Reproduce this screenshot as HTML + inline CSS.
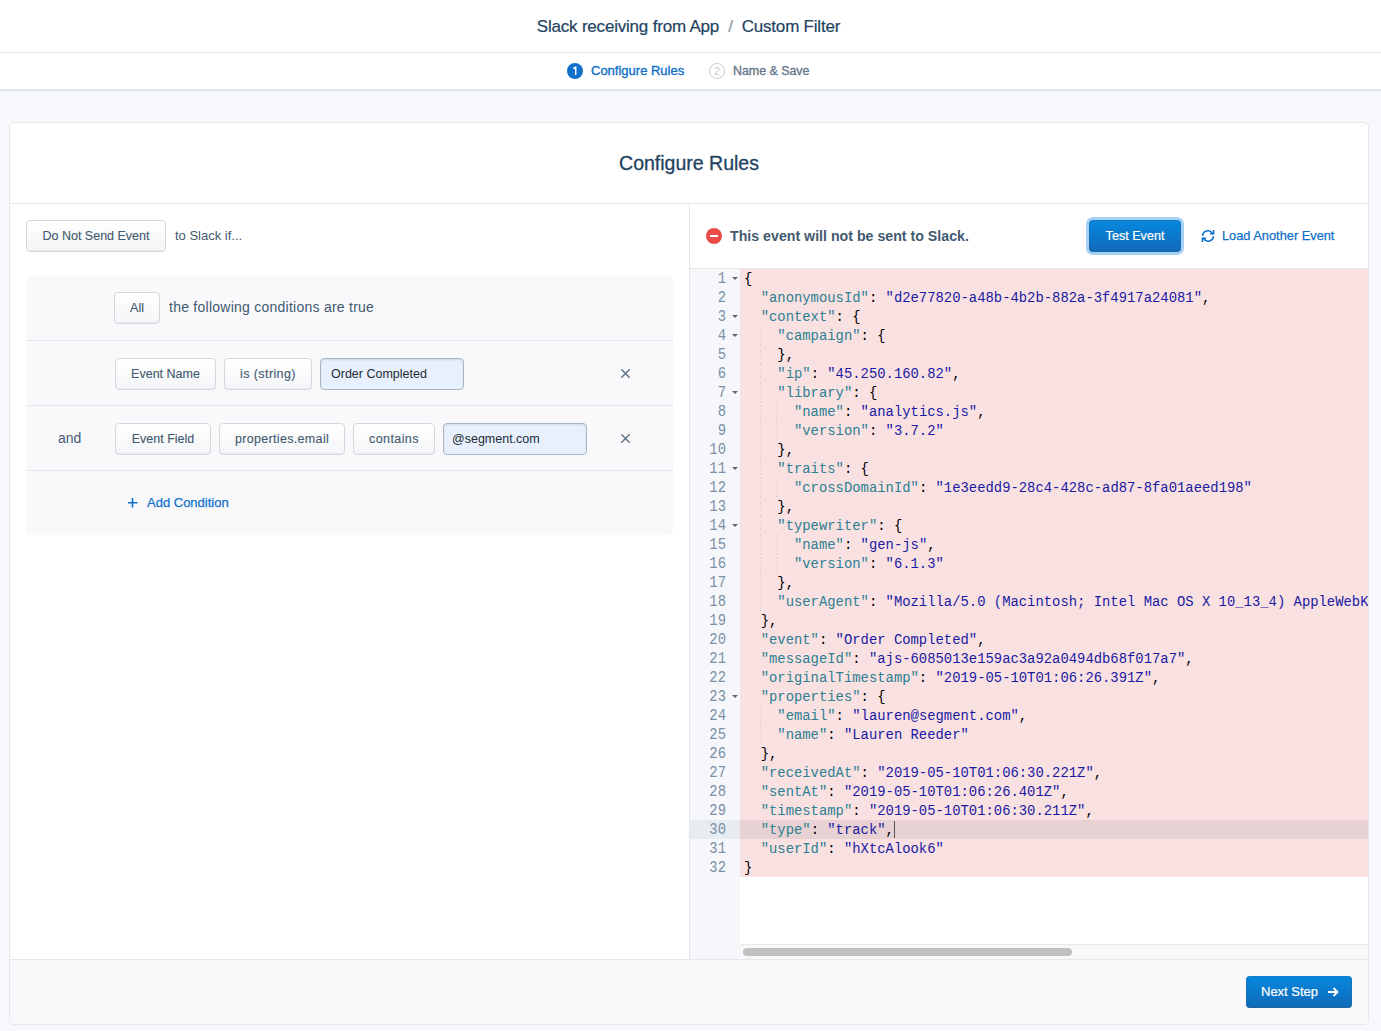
<!DOCTYPE html>
<html><head><meta charset="utf-8">
<style>
*{box-sizing:border-box}
html,body{margin:0;padding:0}
body{width:1381px;height:1031px;overflow:hidden;background:#F6F8FC;font-family:"Liberation Sans",sans-serif;color:#425A70;position:relative}
.a{position:absolute}
#hdr{left:0;top:0;width:1381px;height:53px;background:#fff;border-bottom:1px solid #E4E7EB}
#title{left:-2px;top:1px;width:1381px;height:52px;line-height:52px;text-align:center;font-size:17px;letter-spacing:-0.2px;-webkit-text-stroke:0.2px #234361;color:#234361;white-space:pre}
#title .sep{color:#A6B1BB}
#steps{left:0;top:53px;width:1381px;height:37px;background:#fff;border-bottom:1px solid #E4E7EB;box-shadow:0 1px 0 #D9DDE4}
.circ{width:16px;height:16px;border-radius:50%;font-size:11px;line-height:16px;text-align:center}
#c1{left:567px;top:63px;background:#1070CA;color:#fff;font-size:12px}
#c2{left:709px;top:63px;border:1px solid #C7CED4;color:#C7CED4;line-height:14px}
.steptxt{top:62px;font-size:13px;line-height:18px;white-space:pre;-webkit-text-stroke:0.35px currentColor}
#s1{left:591px;color:#1070CA}
#s2{left:733px;color:#66788A;font-size:12.4px}
#card{left:9px;top:122px;width:1360px;height:903px;background:#fff;border:1px solid #E4E7EB;border-radius:5px;overflow:hidden}
#ctitle{left:10px;top:123px;width:1358px;height:81px;border-bottom:1px solid #E4E7EB;text-align:center;line-height:80px;font-size:19.5px;color:#234361;-webkit-text-stroke:0.3px #234361}
#divider{left:689px;top:204px;width:1px;height:755px;background:#E4E7EB}
#footer{left:10px;top:959px;width:1358px;height:65px;background:#F9F9FB;border-top:1px solid #E4E7EB;border-radius:0 0 4px 4px}
.btn{height:32px;border:1px solid #D4D8DD;border-radius:4px;background:linear-gradient(to bottom,#FFFFFF,#F4F5F7);box-shadow:inset 0 -1px 1px rgba(67,90,111,0.06);font-size:12.5px;line-height:30px;color:#425A70;text-align:center;white-space:pre;-webkit-text-stroke:0.12px #425A70}
.inp{height:32px;border:1px solid #A7B6C2;border-radius:4px;background:#E7F0FC;font-size:12.5px;line-height:30px;color:#1E2A36;white-space:pre;padding-left:10px;box-shadow:inset 0 1px 2px rgba(67,90,111,0.14)}
.lbl{font-size:14px;line-height:18px;white-space:pre;color:#425A70}
#gbox{left:26px;top:276px;width:647px;height:259px;background:#F9F9FB;border-radius:5px}
.rowb{left:26px;width:647px;height:1px;background:#E4E7EB}
.x{width:12px;height:12px}
#nextbtn{left:1246px;top:976px;width:106px;height:32px;border-radius:4px;background:linear-gradient(to bottom,#0788DE,#116AB8);box-shadow:inset 0 0 0 1px rgba(67,90,111,0.2),inset 0 -1px 1px rgba(67,90,111,0.2);color:#fff;font-size:13px;line-height:32px;padding-left:15px;white-space:pre;-webkit-text-stroke:0.2px #fff}
#testbtn{left:1089px;top:220px;width:92px;height:32px;border-radius:4px;background:linear-gradient(to bottom,#0788DE,#116AB8);box-shadow:0 0 0 3px #A6D1F4,inset 0 0 0 1px rgba(67,90,111,0.2);color:#fff;font-size:12.6px;line-height:32px;text-align:center;white-space:pre;-webkit-text-stroke:0.2px #fff}
#status{left:730px;top:227px;font-size:14.2px;line-height:18px;font-weight:bold;color:#425A70;white-space:pre}
#loadtxt{left:1222px;top:227px;font-size:12.8px;line-height:18px;color:#1070CA;white-space:pre;-webkit-text-stroke:0.25px #1070CA}
#addc{left:147px;top:494px;font-size:13px;line-height:18px;color:#1070CA;white-space:pre;-webkit-text-stroke:0.25px #1070CA}
/* editor */
#ed{left:690px;top:268px;width:678px;height:691px;background:#fff;border-top:1px solid #E4E7EB;overflow:hidden}
#gutter{left:690px;top:269px;width:50px;height:690px;background:#F5F7FA}
#codebg{left:740px;top:269px;width:628px;height:608px;background:#F9E1E2}
.mono{font-family:"Liberation Mono",monospace;font-size:13.88px;line-height:19px}
#gl{left:690px;top:269px;width:50px}
.gl{height:19px;line-height:21px;text-align:right;padding-right:14px;color:#7B90A6;position:relative}
.gl.act{background:#E7ECF1}
.gl span{display:inline-block;transform:scaleY(1.2);transform-origin:50% 14.5px}
.fw{position:absolute;left:41.5px;top:8px;width:0;height:0;border-left:3px solid transparent;border-right:3px solid transparent;border-top:3.5px solid #666}
#cl{left:740px;top:269px;width:628px;height:608px;overflow:hidden}
.cl{height:19px;line-height:21px;white-space:pre;padding-left:4px;color:#000}
.cl.act{background:rgba(0,0,0,0.07)}
.k{color:#2D7F91}
.s{color:#1A1AA2}
.ig{display:inline-block;height:19px;vertical-align:top;background:repeating-linear-gradient(to bottom,rgba(0,0,0,0.13) 0 1px,rgba(255,255,255,0.75) 1px 2px) right top/1px 100% no-repeat}
.cur{display:inline-block;width:1px;height:17px;background:#555;vertical-align:top;margin-top:1px}
#hscroll{left:740px;top:944px;width:628px;height:15px;background:#F8F8F8;border-top:1px solid #E8E8E8}
#thumb{left:743px;top:948px;width:329px;height:8px;border-radius:4px;background:#C1C1C1}
</style></head><body>
<div class="a" id="hdr"></div>
<div class="a" id="title">Slack receiving from App  <span class="sep">/</span>  Custom Filter</div>
<div class="a" id="steps"></div>
<svg class="a" style="left:567px;top:63px" width="16" height="16" viewBox="0 0 16 16"><circle cx="8" cy="8" r="8" fill="#1070CA"/><path d="M8.7 12V4.2H8.2C7.8 5 7.2 5.4 6.2 5.6" fill="none" stroke="#fff" stroke-width="1.5"/></svg>
<div class="a steptxt" id="s1">Configure Rules</div>
<div class="a circ" id="c2">2</div>
<div class="a steptxt" id="s2">Name &amp; Save</div>

<div class="a" id="card"></div>
<div class="a" id="ctitle">Configure Rules</div>
<div class="a" id="divider"></div>
<div class="a" id="footer"></div>

<div class="a btn" style="left:26px;top:220px;width:140px">Do Not Send Event</div>
<div class="a lbl" style="left:175px;top:227px;font-size:13px">to Slack if...</div>

<div class="a" id="gbox"></div>
<div class="a rowb" style="top:340px"></div>
<div class="a rowb" style="top:405px"></div>
<div class="a rowb" style="top:470px"></div>

<div class="a btn" style="left:114px;top:292px;width:46px">All</div>
<div class="a lbl" style="left:169px;top:298px;letter-spacing:0.25px">the following conditions are true</div>

<div class="a btn" style="left:115px;top:358px;width:101px">Event Name</div>
<div class="a btn" style="left:224px;top:358px;width:88px;letter-spacing:0.4px">is (string)</div>
<div class="a inp" style="left:320px;top:358px;width:144px">Order Completed</div>
<svg class="a x" style="left:618.5px;top:366.5px;width:13px;height:13px" viewBox="0 0 13 13"><path d="M2.8 2.8L10.2 10.2M10.2 2.8L2.8 10.2" stroke="#66788A" stroke-width="1.6" stroke-linecap="round"/></svg>

<div class="a lbl" style="left:58px;top:429px">and</div>
<div class="a btn" style="left:115px;top:423px;width:96px">Event Field</div>
<div class="a btn" style="left:219px;top:423px;width:126px;letter-spacing:0.33px">properties.email</div>
<div class="a btn" style="left:353px;top:423px;width:82px;letter-spacing:0.4px">contains</div>
<div class="a inp" style="left:443px;top:423px;width:144px;padding-left:8px">@segment.com</div>
<svg class="a x" style="left:618.5px;top:431.5px;width:13px;height:13px" viewBox="0 0 13 13"><path d="M2.8 2.8L10.2 10.2M10.2 2.8L2.8 10.2" stroke="#66788A" stroke-width="1.6" stroke-linecap="round"/></svg>

<svg class="a" style="left:127px;top:497px" width="11" height="11" viewBox="0 0 11 11"><path d="M5.5 1V10.5M1 5.75H10.5" stroke="#1070CA" stroke-width="1.6"/></svg>
<div class="a" id="addc">Add Condition</div>

<svg class="a" style="left:706px;top:228px" width="16" height="16" viewBox="0 0 16 16"><circle cx="8" cy="8" r="8" fill="#EC4C47"/><rect x="4" y="7" width="8" height="2" fill="#fff"/></svg>
<div class="a" id="status">This event will not be sent to Slack.</div>
<div class="a" id="testbtn">Test Event</div>
<svg class="a" style="left:1201px;top:229px" width="14" height="14" viewBox="0 0 14 14"><path d="M1.6 6.9A5.3 5.3 0 0 1 11.3 4.2M12.4 7.1A5.3 5.3 0 0 1 2.7 9.8" fill="none" stroke="#1070CA" stroke-width="1.6"/><path d="M12.6 1.1V4.7H9M1.4 12.9V9.3H5" fill="none" stroke="#1070CA" stroke-width="1.6" stroke-linecap="butt" stroke-linejoin="miter"/></svg>
<div class="a" id="loadtxt">Load Another Event</div>

<div class="a" id="ed"></div>
<div class="a" id="gutter"></div>
<div class="a" id="codebg"></div>
<div class="a mono" id="gl">
<div class="gl"><span>1</span><i class="fw"></i></div>
<div class="gl"><span>2</span></div>
<div class="gl"><span>3</span><i class="fw"></i></div>
<div class="gl"><span>4</span><i class="fw"></i></div>
<div class="gl"><span>5</span></div>
<div class="gl"><span>6</span></div>
<div class="gl"><span>7</span><i class="fw"></i></div>
<div class="gl"><span>8</span></div>
<div class="gl"><span>9</span></div>
<div class="gl"><span>10</span></div>
<div class="gl"><span>11</span><i class="fw"></i></div>
<div class="gl"><span>12</span></div>
<div class="gl"><span>13</span></div>
<div class="gl"><span>14</span><i class="fw"></i></div>
<div class="gl"><span>15</span></div>
<div class="gl"><span>16</span></div>
<div class="gl"><span>17</span></div>
<div class="gl"><span>18</span></div>
<div class="gl"><span>19</span></div>
<div class="gl"><span>20</span></div>
<div class="gl"><span>21</span></div>
<div class="gl"><span>22</span></div>
<div class="gl"><span>23</span><i class="fw"></i></div>
<div class="gl"><span>24</span></div>
<div class="gl"><span>25</span></div>
<div class="gl"><span>26</span></div>
<div class="gl"><span>27</span></div>
<div class="gl"><span>28</span></div>
<div class="gl"><span>29</span></div>
<div class="gl act"><span>30</span></div>
<div class="gl"><span>31</span></div>
<div class="gl"><span>32</span></div></div>
<div class="a mono" id="cl">
<div class="cl">{</div>
<div class="cl">  <span class="k">"anonymousId"</span>: <span class="s">"d2e77820-a48b-4b2b-882a-3f4917a24081"</span>,</div>
<div class="cl">  <span class="k">"context"</span>: {</div>
<div class="cl"><span class="ig">  </span>  <span class="k">"campaign"</span>: {</div>
<div class="cl"><span class="ig">  </span>  },</div>
<div class="cl"><span class="ig">  </span>  <span class="k">"ip"</span>: <span class="s">"45.250.160.82"</span>,</div>
<div class="cl"><span class="ig">  </span>  <span class="k">"library"</span>: {</div>
<div class="cl"><span class="ig">  </span><span class="ig">  </span>  <span class="k">"name"</span>: <span class="s">"analytics.js"</span>,</div>
<div class="cl"><span class="ig">  </span><span class="ig">  </span>  <span class="k">"version"</span>: <span class="s">"3.7.2"</span></div>
<div class="cl"><span class="ig">  </span>  },</div>
<div class="cl"><span class="ig">  </span>  <span class="k">"traits"</span>: {</div>
<div class="cl"><span class="ig">  </span><span class="ig">  </span>  <span class="k">"crossDomainId"</span>: <span class="s">"1e3eedd9-28c4-428c-ad87-8fa01aeed198"</span></div>
<div class="cl"><span class="ig">  </span>  },</div>
<div class="cl"><span class="ig">  </span>  <span class="k">"typewriter"</span>: {</div>
<div class="cl"><span class="ig">  </span><span class="ig">  </span>  <span class="k">"name"</span>: <span class="s">"gen-js"</span>,</div>
<div class="cl"><span class="ig">  </span><span class="ig">  </span>  <span class="k">"version"</span>: <span class="s">"6.1.3"</span></div>
<div class="cl"><span class="ig">  </span>  },</div>
<div class="cl"><span class="ig">  </span>  <span class="k">"userAgent"</span>: <span class="s">"Mozilla/5.0 (Macintosh; Intel Mac OS X 10_13_4) AppleWebKit/537.36 (KHTML, like Gecko) Chrome/74.0.3729.131 Safari/537.36"</span></div>
<div class="cl">  },</div>
<div class="cl">  <span class="k">"event"</span>: <span class="s">"Order Completed"</span>,</div>
<div class="cl">  <span class="k">"messageId"</span>: <span class="s">"ajs-6085013e159ac3a92a0494db68f017a7"</span>,</div>
<div class="cl">  <span class="k">"originalTimestamp"</span>: <span class="s">"2019-05-10T01:06:26.391Z"</span>,</div>
<div class="cl">  <span class="k">"properties"</span>: {</div>
<div class="cl"><span class="ig">  </span>  <span class="k">"email"</span>: <span class="s">"lauren@segment.com"</span>,</div>
<div class="cl"><span class="ig">  </span>  <span class="k">"name"</span>: <span class="s">"Lauren Reeder"</span></div>
<div class="cl">  },</div>
<div class="cl">  <span class="k">"receivedAt"</span>: <span class="s">"2019-05-10T01:06:30.221Z"</span>,</div>
<div class="cl">  <span class="k">"sentAt"</span>: <span class="s">"2019-05-10T01:06:26.401Z"</span>,</div>
<div class="cl">  <span class="k">"timestamp"</span>: <span class="s">"2019-05-10T01:06:30.211Z"</span>,</div>
<div class="cl act">  <span class="k">"type"</span>: <span class="s">"track"</span>,<span class="cur"></span></div>
<div class="cl">  <span class="k">"userId"</span>: <span class="s">"hXtcAlook6"</span></div>
<div class="cl">}</div></div>
<div class="a" id="hscroll"></div><div class="a" id="thumb"></div>
<div class="a" id="nextbtn">Next Step</div>
<svg class="a" style="left:1327px;top:986px" width="12" height="12" viewBox="0 0 12 12"><path d="M1 6H10.5M6.5 2L10.5 6L6.5 10" fill="none" stroke="#fff" stroke-width="1.8"/></svg>
</body></html>
